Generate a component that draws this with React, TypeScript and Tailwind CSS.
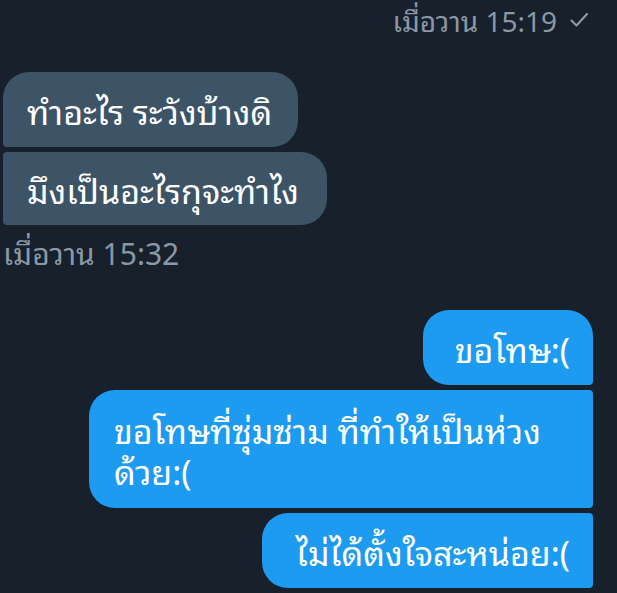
import React from "react";

const font = { fontFamily: '"Noto Sans Thai Looped", "Noto Sans Thai", "Noto Sans", sans-serif' };

export default function App() {
  return (
    <div
      className="w-[617px] h-[593px] overflow-hidden bg-[#17202b] flex flex-col"
      style={font}
    >
      <div className="flex justify-end items-center pr-[28px] h-[40px] text-[28px] leading-[34px] text-[#8b98a5] gap-[12px]">
        <span>เมื่อวาน 15:19</span>
        <svg width="20" height="20" viewBox="0 0 20 20" fill="none">
          <path d="M2.5 10.5 L7.5 15.5 L18 4" stroke="#8b98a5" strokeWidth="2.2" strokeLinecap="round" strokeLinejoin="round" />
        </svg>
      </div>

      <div className="flex flex-col items-start gap-[5px] ml-[3px] mt-[32px]">
        <div className="bg-[#3d5466] text-white text-[34px] leading-[41px] py-[17px] pl-[24px] pr-[26px] rounded-tl-[26px] rounded-tr-[26px] rounded-br-[26px] rounded-bl-[4px]">
          ทำอะไร ระวังบ้างดิ
        </div>
        <div className="bg-[#3d5466] text-white text-[34px] leading-[41px] py-[16px] pl-[24px] pr-[28px] rounded-tl-[4px] rounded-tr-[26px] rounded-br-[26px] rounded-bl-[4px]">
          มึงเป็นอะไรกุจะทำไง
        </div>
      </div>

      <div className="ml-[3px] mt-[10px] text-[30px] text-[#8b98a5] leading-[34px]">เมื่อวาน 15:32</div>

      <div className="flex flex-col items-end gap-[5px] mr-[24px] mt-[41px]">
        <div className="bg-[#1d9bf0] text-white text-[34px] leading-[41px] py-[17px] pl-[32px] pr-[23px] rounded-tl-[26px] rounded-tr-[26px] rounded-bl-[26px] rounded-br-[4px]">
          ขอโทษ:(
        </div>
        <div className="w-[504px] bg-[#1d9bf0] text-white text-[34px] leading-[41px] py-[18px] pl-[25px] pr-[23px] rounded-tl-[26px] rounded-tr-[4px] rounded-bl-[26px] rounded-br-[4px]">
          ขอโทษที่ซุ่มซ่าม ที่ทำให้เป็นห่วง ด้วย:(
        </div>
        <div className="bg-[#1d9bf0] text-white text-[34px] leading-[41px] py-[17px] pl-[34px] pr-[23px] rounded-tl-[26px] rounded-tr-[4px] rounded-bl-[26px] rounded-br-[4px]">
          ไม่ได้ตั้งใจสะหน่อย:(
        </div>
      </div>
    </div>
  );
}
